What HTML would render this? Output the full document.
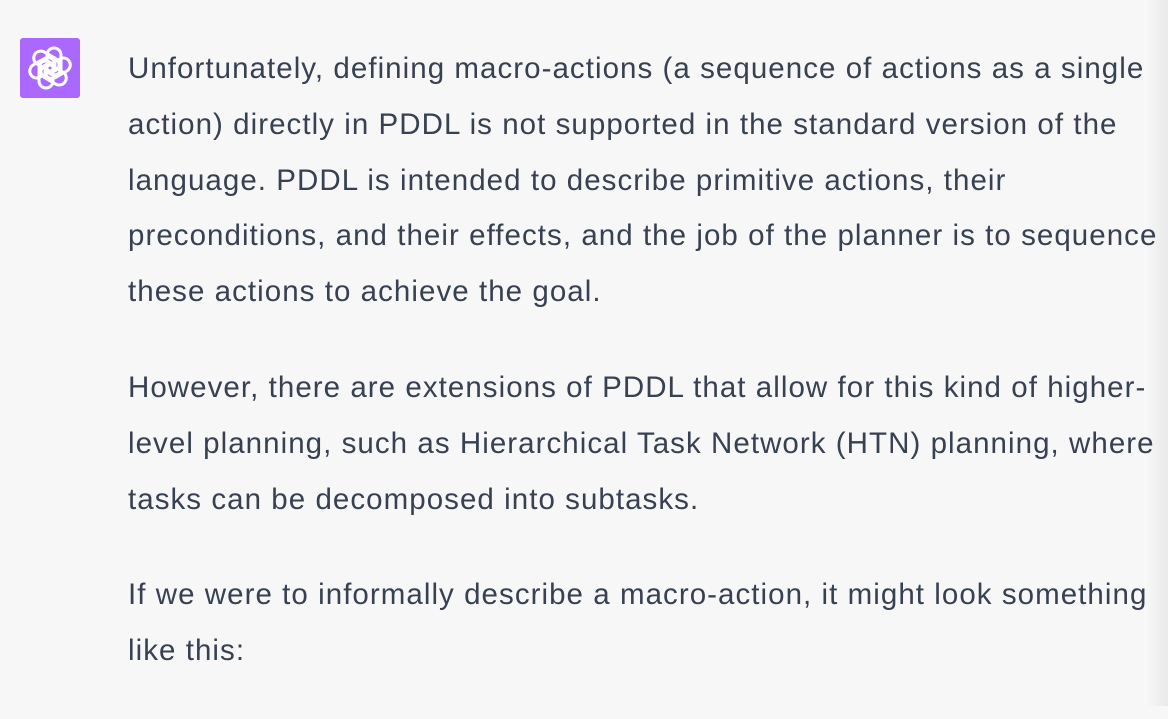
<!DOCTYPE html>
<html><head><style>
html,body{margin:0;padding:0;}
body{width:1168px;height:706px;overflow:hidden;background:#f7f7f8;position:relative;font-family:"Liberation Sans",sans-serif;}
.shade{position:absolute;right:0;top:0;width:22px;height:706px;background:linear-gradient(to right,rgba(0,0,0,0),rgba(0,0,0,0.06));}
.icon{position:absolute;left:20px;top:38px;width:60px;height:60px;background:#ab68ff;border-radius:3px;}
.txt{position:absolute;left:128px;top:41px;color:#374151;font-size:29.5px;letter-spacing:1.05px;line-height:55.8px;}
.txt p{margin:0 0 40px 0;white-space:nowrap;}
</style></head><body>
<div class="icon"><svg width="60" height="60" viewBox="0 0 60 60">
<g fill="none" stroke="#fff" stroke-width="3" transform="translate(30,30)">
<rect x="-3" y="-20" width="14" height="27" rx="7" transform="rotate(0)"/>
<rect x="-3" y="-20" width="14" height="27" rx="7" transform="rotate(60)"/>
<rect x="-3" y="-20" width="14" height="27" rx="7" transform="rotate(120)"/>
<rect x="-3" y="-20" width="14" height="27" rx="7" transform="rotate(180)"/>
<rect x="-3" y="-20" width="14" height="27" rx="7" transform="rotate(240)"/>
<rect x="-3" y="-20" width="14" height="27" rx="7" transform="rotate(300)"/>
</g></svg></div>
<div class="txt">
<p>Unfortunately, defining macro-actions (a sequence of actions as a single<br>action) directly in PDDL is not supported in the standard version of the<br>language. PDDL is intended to describe primitive actions, their<br>preconditions, and their effects, and the job of the planner is to sequence<br>these actions to achieve the goal.</p>
<p>However, there are extensions of PDDL that allow for this kind of higher-<br>level planning, such as Hierarchical Task Network (HTN) planning, where<br>tasks can be decomposed into subtasks.</p>
<p>If we were to informally describe a macro-action, it might look something<br>like this:</p>
</div>
<div class="shade"></div>
</body></html>
